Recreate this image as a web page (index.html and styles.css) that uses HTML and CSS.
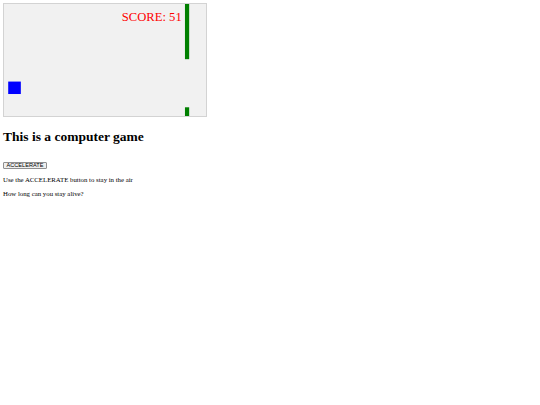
FILE: index.html
```html
<!DOCTYPE html>
<html>
<head>
<meta charset="utf-8">
<link rel="stylesheet" href="styles.css">
</head>
<body class="page">
<svg class="game" width="202" height="112" viewBox="0 0 480 270" preserveAspectRatio="none">
  <rect class="obstacle" x="430" y="0" width="10" height="133"/>
  <rect class="obstacle" x="430" y="249" width="10" height="21"/>
  <rect class="player" x="10" y="187" width="30" height="30"/>
  <text class="score" x="280" y="40">SCORE: 51</text>
</svg>
<h1 class="title">This is a computer game</h1>
<div class="controls">
  <button class="btn">ACCELERATE</button>
</div>
<p class="info">Use the ACCELERATE button to stay in the air</p>
<p class="info">How long can you stay alive?</p>
</body>
</html>
```
FILE: styles.css
```css
html {
  background: #ffffff;
}
.page {
  margin: 3px;
  font-family: "Liberation Serif", "Times New Roman", serif;
  font-size: 6.8px;
  color: #000000;
}
.game {
  display: block;
  border: 1px solid #d3d3d3;
  background: #f1f1f1;
}
.obstacle {
  fill: #008000;
}
.player {
  fill: #0000ff;
}
.score {
  fill: #ff0000;
  font-family: "Liberation Serif", serif;
  font-size: 30px;
}
.title {
  font-size: 13.5px;
  line-height: 16px;
  font-weight: bold;
  margin: 11.8px 0 0;
}
.controls {
  display: flex;
  margin: 17px 0 7.5px;
}
.btn {
  display: flex;
  align-items: center;
  justify-content: center;
  box-sizing: border-box;
  height: 7px;
  padding: 0 2.5px;
  margin: 0;
  font-family: "Liberation Sans", Arial, sans-serif;
  font-size: 5.6px;
  line-height: 6px;
  color: #000000;
  background: #efefef;
  border: 1px solid #8f8f8f;
  border-radius: 1px;
  overflow: visible;
}
.info {
  margin: 6.5px 0;
  line-height: 7px;
}
```
